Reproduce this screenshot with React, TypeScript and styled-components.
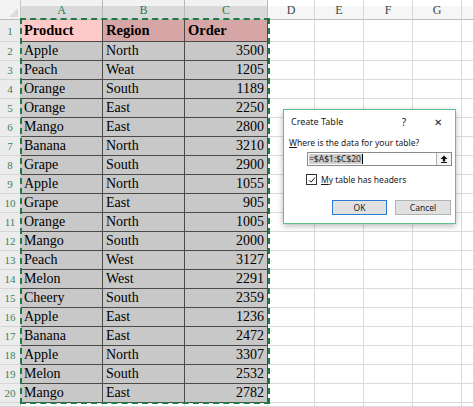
import styled, { createGlobalStyle } from "styled-components";

const GlobalStyle = createGlobalStyle`
  html, body {
    margin: 0;
    padding: 0;
    background: #ffffff;
    overflow: hidden;
  }
`;

const rows: [string, string, number][] = [
  ["Apple", "North", 3500],
  ["Peach", "Weat", 1205],
  ["Orange", "South", 1189],
  ["Orange", "East", 2250],
  ["Mango", "East", 2800],
  ["Banana", "North", 3210],
  ["Grape", "South", 2900],
  ["Apple", "North", 1055],
  ["Grape", "East", 905],
  ["Orange", "North", 1005],
  ["Mango", "South", 2000],
  ["Peach", "West", 3127],
  ["Melon", "West", 2291],
  ["Cheery", "South", 2359],
  ["Apple", "East", 1236],
  ["Banana", "East", 2472],
  ["Apple", "North", 3307],
  ["Melon", "South", 2532],
  ["Mango", "East", 2782],
];

const emptyCols = ["D", "E", "F", "G", ""];

const Sheet = styled.div`
  position: relative;
  width: 474px;
  height: 407px;
  display: grid;
  grid-template-columns: 21px 82px 82px 83px 47px 49px 49px 49px 1fr;
  grid-template-rows: 20px 22px repeat(19, 19px) 1fr;
  font-family: "Liberation Serif", serif;
  color: #000;
`;

const Corner = styled.div`
  position: relative;
  background: #f3f3f3;
  border-right: 1px solid #c8c8c8;
  border-bottom: 1px solid #bdbdbd;

  &::after {
    content: "";
    position: absolute;
    right: 2px;
    bottom: 2px;
    border-style: solid;
    border-width: 0 0 9px 9px;
    border-color: transparent transparent #dcdcdc transparent;
  }
`;

const ColHeader = styled.div<{ $active?: boolean }>`
  display: flex;
  align-items: flex-end;
  justify-content: center;
  padding-bottom: 1px;
  font-size: 12px;
  background: ${({ $active }) =>
    $active
      ? "linear-gradient(#f2f2f2 0 6px, #d9d9d9 6px)"
      : "linear-gradient(#ffffff 0 6px, #f6f6f6 6px)"};
  color: ${({ $active }) => ($active ? "#2e7a4f" : "#444")};
  border-right: 1px solid ${({ $active }) => ($active ? "#b9b9b9" : "#d8d8d8")};
  border-bottom: 1px solid #bdbdbd;
`;

const RowHeader = styled.div`
  display: flex;
  align-items: center;
  justify-content: center;
  font-size: 11px;
  background: #ececec;
  color: #3f7f5a;
  border-right: 1px solid #c8c8c8;
  border-bottom: 1px solid #d6d6d6;
`;

const Cell = styled.div<{ $fill?: string; $bold?: boolean; $right?: boolean }>`
  display: flex;
  align-items: center;
  justify-content: ${({ $right }) => ($right ? "flex-end" : "flex-start")};
  padding: 0 3px;
  font-size: ${({ $bold }) => ($bold ? "14.5px" : "14px")};
  font-weight: ${({ $bold }) => ($bold ? 700 : 400)};
  background: ${({ $fill }) => $fill ?? "#c8c8c8"};
  border-right: 1px solid #4a4a4a;
  border-bottom: 1px solid #4a4a4a;
  white-space: nowrap;
  overflow: hidden;
`;

const EmptyCell = styled.div`
  border-right: 1px solid #dadada;
  border-bottom: 1px solid #dadada;
`;

/* marching-ants outline over A1:C20; absolute so it stays out of auto-placement */
const Marquee = styled.div`
  position: absolute;
  grid-column: 2 / 5;
  grid-row: 2 / 22;
  top: -2px;
  left: -1px;
  right: -2px;
  bottom: -1px;
  border: 2px dashed #1f7a45;
  pointer-events: none;
  z-index: 1;
`;

const Dialog = styled.div`
  position: absolute;
  left: 283px;
  top: 109px;
  width: 171px;
  height: 113px;
  display: flex;
  flex-direction: column;
  background: #ffffff;
  border: 1px solid #5cc08c;
  box-shadow: 0 2px 6px rgba(0, 0, 0, 0.28);
  font-family: "Noto Sans", sans-serif;
  font-size: 8.5px;
  color: #1a1a1a;
  z-index: 2;
`;

const TitleBar = styled.div`
  display: flex;
  align-items: center;
  height: 23px;
  padding: 0 9px 0 7px;
  font-size: 9px;
`;

const Title = styled.span`
  flex: 1;
`;

const TitleButton = styled.span`
  width: 16px;
  text-align: center;
  margin-left: 18px;
  font-size: 10px;
  color: #222;
`;

const Body = styled.div`
  display: flex;
  flex-direction: column;
  padding: 3px 3px 0 5px;
`;

const Prompt = styled.div`
  height: 14px;
  line-height: 14px;

  u {
    text-decoration: underline;
  }
`;

const RefInput = styled.div`
  display: flex;
  align-items: center;
  margin: 2px 0 0 18px;
  height: 12px;
  border: 1px solid #8a8a8a;
  background: #fff;
`;

const RefText = styled.span`
  flex: 1;
  display: flex;
  align-items: center;
  height: 100%;
  padding-left: 1px;
`;

const Selected = styled.span`
  background: #cfcfcf;
  line-height: 10px;
  padding-right: 1px;
  border-right: 1px solid #000;
`;

const CollapseButton = styled.span`
  display: flex;
  align-items: center;
  justify-content: center;
  width: 14px;
  height: 100%;
  border-left: 1px solid #b0b0b0;
  background: #f4f4f4;
`;

const CheckRow = styled.label`
  display: flex;
  align-items: center;
  gap: 4px;
  margin: 8px 0 0 17px;
  height: 11px;

  u {
    text-decoration: underline;
  }
`;

const CheckBox = styled.span`
  display: flex;
  align-items: center;
  justify-content: center;
  width: 9px;
  height: 9px;
  border: 1px solid #333;
  background: #fff;
`;

const Buttons = styled.div`
  display: flex;
  justify-content: flex-end;
  gap: 8px;
  margin-top: 15px;
  padding-right: 1px;
`;

const Button = styled.button<{ $primary?: boolean }>`
  width: ${({ $primary }) => ($primary ? "55px" : "56px")};
  height: 15px;
  padding: 0;
  font-family: "Noto Sans", sans-serif;
  font-size: 8.5px;
  color: #1a1a1a;
  background: #e1e1e1;
  border: ${({ $primary }) => ($primary ? "1.5px solid #2b7bd3" : "1px solid #b3b3b3")};
`;

export default function App() {
  return (
    <>
      <GlobalStyle />
      <Sheet>
        <Corner />
        <ColHeader $active>A</ColHeader>
        <ColHeader $active>B</ColHeader>
        <ColHeader $active>C</ColHeader>
        {emptyCols.map((c, i) => (
          <ColHeader key={i}>{c}</ColHeader>
        ))}

        <RowHeader>1</RowHeader>
        <Cell $bold $fill="#ffc9c9">Product</Cell>
        <Cell $bold $fill="#d6a6a6">Region</Cell>
        <Cell $bold $fill="#d6a6a6">Order</Cell>
        {emptyCols.map((_, i) => (
          <EmptyCell key={i} />
        ))}

        {rows.map(([product, region, order], r) => (
          <Row key={r} n={r + 2} product={product} region={region} order={order} />
        ))}

        <RowHeader />
        {[0, 1, 2].map((i) => (
          <EmptyCell key={"b" + i} />
        ))}
        {emptyCols.map((_, i) => (
          <EmptyCell key={i} />
        ))}

        <Marquee />

        <Dialog>
          <TitleBar>
            <Title>Create Table</Title>
            <TitleButton>?</TitleButton>
            <TitleButton>✕</TitleButton>
          </TitleBar>
          <Body>
            <Prompt>
              <u>W</u>here is the data for your table?
            </Prompt>
            <RefInput>
              <RefText>
                <Selected>=$A$1:$C$20</Selected>
              </RefText>
              <CollapseButton>
                <svg width="8" height="8" viewBox="0 0 8 8">
                  <path d="M4 0.5 L7.5 4 H5.2 V6.5 H2.8 V4 H0.5 Z" fill="#111" />
                  <rect x="1" y="7" width="6" height="1" fill="#111" />
                </svg>
              </CollapseButton>
            </RefInput>
            <CheckRow>
              <CheckBox>
                <svg width="8" height="8" viewBox="0 0 8 8">
                  <path d="M1 4.2 L3 6.2 L7 1.5" fill="none" stroke="#222" strokeWidth="1" />
                </svg>
              </CheckBox>
              <span>
                <u>M</u>y table has headers
              </span>
            </CheckRow>
            <Buttons>
              <Button $primary>OK</Button>
              <Button>Cancel</Button>
            </Buttons>
          </Body>
        </Dialog>
      </Sheet>
    </>
  );
}

function Row({
  n,
  product,
  region,
  order,
}: {
  n: number;
  product: string;
  region: string;
  order: number;
}) {
  return (
    <>
      <RowHeader>{n}</RowHeader>
      <Cell>{product}</Cell>
      <Cell>{region}</Cell>
      <Cell $right>{order}</Cell>
      {emptyCols.map((_, i) => (
        <EmptyCell key={i} />
      ))}
    </>
  );
}
